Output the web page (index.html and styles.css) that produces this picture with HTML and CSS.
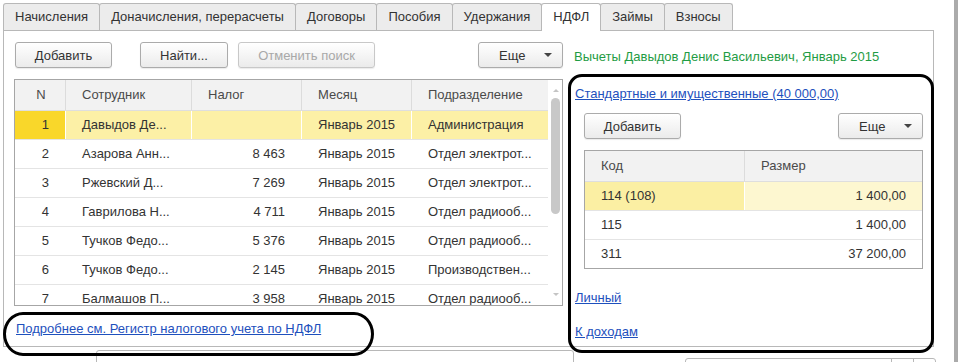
FILE: index.html
```html
<!DOCTYPE html>
<html lang="ru">
<head>
  <meta charset="UTF-8">
  <title>НДФЛ</title>
  <link rel="stylesheet" href="styles.css">
</head>
<body>
  <div class="screen">
    <div class="window">
      <div class="tabs">
        <div class="tab">Начисления</div>
        <div class="tab">Доначисления, перерасчеты</div>
        <div class="tab">Договоры</div>
        <div class="tab">Пособия</div>
        <div class="tab">Удержания</div>
        <div class="tab active">НДФЛ</div>
        <div class="tab">Займы</div>
        <div class="tab">Взносы</div>
      </div>

      <div class="panel">
        <div class="col-left">
          <div class="toolbar">
            <button class="btn btn-add">Добавить</button>
            <button class="btn btn-find">Найти...</button>
            <button class="btn btn-cancel" disabled>Отменить поиск</button>
            <button class="btn btn-more">Еще <span class="caret"></span></button>
          </div>

          <div class="grid grid-tax">
            <div class="grid-body">
              <div class="row head">
                <div class="cell c-n center">N</div>
                <div class="cell c-emp">Сотрудник</div>
                <div class="cell c-tax">Налог</div>
                <div class="cell c-month">Месяц</div>
                <div class="cell c-dep">Подразделение</div>
              </div>
              <div class="row selected">
                <div class="cell c-n num current">1</div>
                <div class="cell c-emp">Давыдов Де...</div>
                <div class="cell c-tax num"></div>
                <div class="cell c-month">Январь 2015</div>
                <div class="cell c-dep">Администрация</div>
              </div>
              <div class="row">
                <div class="cell c-n num">2</div>
                <div class="cell c-emp">Азарова Анн...</div>
                <div class="cell c-tax num">8 463</div>
                <div class="cell c-month">Январь 2015</div>
                <div class="cell c-dep">Отдел электрот...</div>
              </div>
              <div class="row">
                <div class="cell c-n num">3</div>
                <div class="cell c-emp">Ржевский Д...</div>
                <div class="cell c-tax num">7 269</div>
                <div class="cell c-month">Январь 2015</div>
                <div class="cell c-dep">Отдел электрот...</div>
              </div>
              <div class="row">
                <div class="cell c-n num">4</div>
                <div class="cell c-emp">Гаврилова Н...</div>
                <div class="cell c-tax num">4 711</div>
                <div class="cell c-month">Январь 2015</div>
                <div class="cell c-dep">Отдел радиооб...</div>
              </div>
              <div class="row">
                <div class="cell c-n num">5</div>
                <div class="cell c-emp">Тучков Федо...</div>
                <div class="cell c-tax num">5 376</div>
                <div class="cell c-month">Январь 2015</div>
                <div class="cell c-dep">Отдел радиооб...</div>
              </div>
              <div class="row">
                <div class="cell c-n num">6</div>
                <div class="cell c-emp">Тучков Федо...</div>
                <div class="cell c-tax num">2 145</div>
                <div class="cell c-month">Январь 2015</div>
                <div class="cell c-dep">Производствен...</div>
              </div>
              <div class="row">
                <div class="cell c-n num">7</div>
                <div class="cell c-emp">Балмашов П...</div>
                <div class="cell c-tax num">3 958</div>
                <div class="cell c-month">Январь 2015</div>
                <div class="cell c-dep">Отдел радиооб...</div>
              </div>
            </div>
            <div class="vscroll">
              <span class="arrow up"></span>
              <span class="thumb"></span>
              <span class="arrow down"></span>
            </div>
          </div>

          <a class="link reg-link" href="#">Подробнее см. Регистр налогового учета по НДФЛ</a>
        </div>

        <div class="col-right">
          <div class="title">Вычеты Давыдов Денис Васильевич, Январь 2015</div>
          <a class="link std-link" href="#">Стандартные и имущественные (40 000,00)</a>
          <div class="toolbar sub-toolbar">
            <button class="btn btn-add">Добавить</button>
            <button class="btn btn-more">Еще <span class="caret"></span></button>
          </div>
          <div class="grid grid-ded">
            <div class="row head">
              <div class="cell c-code">Код</div>
              <div class="cell c-size">Размер</div>
            </div>
            <div class="row selected">
              <div class="cell c-code current">114 (108)</div>
              <div class="cell c-size num">1 400,00</div>
            </div>
            <div class="row">
              <div class="cell c-code">115</div>
              <div class="cell c-size num">1 400,00</div>
            </div>
            <div class="row">
              <div class="cell c-code">311</div>
              <div class="cell c-size num">37 200,00</div>
            </div>
          </div>
          <a class="link personal-link" href="#">Личный</a>
          <a class="link income-link" href="#">К доходам</a>
        </div>
      </div>

      <div class="footer">
        <div class="field field-wide"></div>
        <div class="field-group">
          <div class="field field-mid"></div>
          <div class="field field-btn"></div>
          <div class="field field-btn"></div>
        </div>
      </div>
    </div>
    <div class="edge"></div>

    <div class="mark mark-left"></div>
    <div class="mark mark-right"></div>
  </div>
</body>
</html>
```

FILE: styles.css
```css
body {
  margin: 0;
  background: #fff;
  color: #333;
  font-family: 'Liberation Sans', Arial, sans-serif;
  font-size: 13px;
}

.screen {
  position: relative;
  display: flex;
  width: 958px;
  height: 362px;
  overflow: hidden;
}

.window {
  width: 954px;
}

.edge {
  width: 4px;
  background: #ababab;
}

/* tabs */

.tabs {
  display: flex;
  align-items: flex-end;
  height: 27px;
  margin-top: 3px;
  padding-left: 3px;
}

.tab {
  height: 26px;
  line-height: 26px;
  padding: 0 11px;
  margin-right: -1px;
  border: 1px solid #b8b8b8;
  border-bottom: none;
  border-radius: 3px 3px 0 0;
  background: #ececec;
  color: #333;
  white-space: nowrap;
}

.tab.active {
  position: relative;
  z-index: 1;
  height: 27px;
  margin-bottom: -1px;
  background: #fff;
}

/* main panel */

.panel {
  display: flex;
  width: 929px;
  height: 315px;
  margin-left: 3px;
  border: 1px solid #b8b8b8;
}

.col-left {
  width: 549px;
  padding-left: 10px;
}

.col-right {
  width: 349px;
  margin-left: 11px;
}

/* buttons */

.toolbar {
  display: flex;
  margin-top: 11px;
}

.btn {
  height: 26px;
  padding: 0;
  border: 1px solid #ababab;
  border-radius: 3px;
  background: linear-gradient(to bottom, #ffffff, #ebebeb);
  box-shadow: 0 1px 1px rgba(0,0,0,0.08);
  color: #333;
  font-family: inherit;
  font-size: 13px;
}

.btn:disabled {
  border-color: #c8c8c8;
  color: #a8a8a8;
}

.btn-add {
  width: 97px;
  margin-left: 1px;
}

.btn-find {
  width: 88px;
  margin-left: 28px;
}

.btn-cancel {
  width: 137px;
  margin-left: 10px;
}

.btn-more {
  display: flex;
  align-items: center;
  justify-content: space-between;
  width: 85px;
  margin-left: auto;
  padding: 0 10px 0 20px;
}

.caret {
  width: 0;
  height: 0;
  border-left: 4px solid transparent;
  border-right: 4px solid transparent;
  border-top: 4px solid #444;
}

/* tables */

.grid {
  display: flex;
  border: 1px solid #a6a6a6;
  overflow: hidden;
}

.grid-tax {
  width: 547px;
  height: 225px;
  margin-top: 11px;
}

.grid-body {
  width: 533px;
}

.row {
  display: flex;
  height: 28px;
  line-height: 28px;
  border-bottom: 1px solid #e4e4e4;
}

.row.head {
  height: 30px;
  line-height: 30px;
  background: #f2f2f2;
  color: #4a4a4a;
  border-bottom-color: #dedede;
}

.cell {
  box-sizing: border-box;
  padding: 0 16px 0 16px;
  border-right: 1px solid #fff;
  white-space: nowrap;
  overflow: hidden;
}

.row.head .cell {
  border-right-color: #dcdcdc;
}

.row .cell:last-child {
  border-right: none;
}

.center {
  text-align: center;
  padding: 0 0 0 2px;
}

.num {
  text-align: right;
}

.c-n { width: 51px; }
.c-emp { width: 126px; }
.c-tax { width: 110px; }
.c-month { width: 110px; }
.c-dep { width: 136px; }

.c-n.num {
  padding-right: 16px;
}

.row.selected {
  background: #fcf0a6;
}

.grid-tax .row.selected .current {
  background: #f9d72a;
}

.vscroll {
  display: flex;
  flex-direction: column;
  align-items: center;
  width: 14px;
  border-left: 1px solid #fff;
}

.arrow {
  width: 0;
  height: 0;
  border-left: 3px solid transparent;
  border-right: 3px solid transparent;
}

.arrow.up {
  margin-top: 9px;
  border-bottom: 3px solid #c4c4c4;
}

.arrow.down {
  margin-top: 79px;
  border-top: 3px solid #c4c4c4;
}

.thumb {
  width: 9px;
  height: 116px;
  margin-top: 6px;
  border-radius: 5px;
  background: #c8c8c8;
}

/* right part */

.title {
  height: 26px;
  line-height: 26px;
  margin-top: 13px;
  color: #1f9c44;
  white-space: nowrap;
}

.link {
  display: block;
  width: max-content;
  line-height: 15px;
  color: #1e50bd;
  text-decoration: underline;
}

.reg-link {
  margin: 15px 0 0 2px;
}

.std-link {
  margin-top: 16px;
  margin-left: 1px;
}

.sub-toolbar {
  margin: 12px 0 0 10px;
}

.sub-toolbar .btn-add {
  margin-left: 0;
}

.grid-ded {
  flex-direction: column;
  width: 337px;
  height: 117px;
  margin: 11px 0 0 10px;
}

.grid-ded .row {
  flex-shrink: 0;
}

.c-code {
  width: 160px;
}

.c-size {
  flex: 1;
  padding-right: 16px;
}

.grid-ded .row.selected .c-code {
  background: #fbefa3;
}

.grid-ded .row.selected .c-size {
  background: #fdf7d0;
}

.personal-link {
  margin-top: 21px;
  margin-left: 1px;
}

.income-link {
  margin-top: 19px;
  margin-left: 1px;
}

/* cut-off fields below the panel */

.footer {
  display: flex;
  align-items: flex-start;
  padding-left: 96px;
}

.field {
  height: 20px;
  border: 1px solid #b8b8b8;
  border-radius: 3px;
}

.field-wide {
  width: 476px;
  margin-top: 3px;
}

.field-group {
  display: flex;
  margin: 11px 0 0 111px;
}

.field-mid {
  width: 205px;
  border-radius: 3px 0 0 3px;
}

.field-btn {
  width: 21px;
  margin-left: -1px;
  border-radius: 0;
}

.field-btn:last-child {
  border-radius: 0 3px 3px 0;
}

/* hand-drawn annotation marks */

.mark {
  position: absolute;
  box-sizing: border-box;
  border: 3px solid #000;
  pointer-events: none;
}

.mark-left {
  left: 3px;
  top: 312px;
  width: 371px;
  height: 44px;
  border-radius: 20px / 22px;
}

.mark-right {
  left: 568px;
  top: 74px;
  width: 366px;
  height: 279px;
  border-radius: 14px;
}
```
